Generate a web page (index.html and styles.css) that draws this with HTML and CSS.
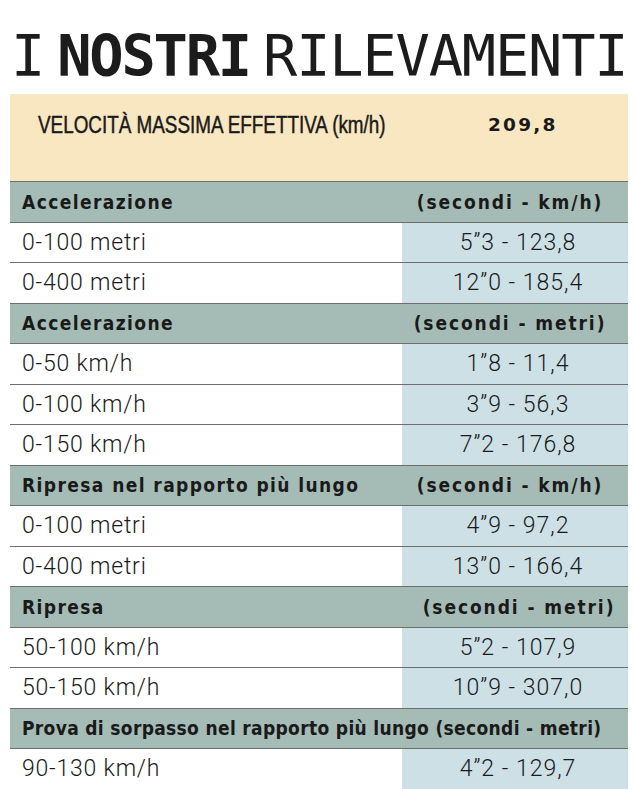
FILE: index.html
```html
<!DOCTYPE html>
<html lang="it">
<head>
<meta charset="utf-8">
<title>I nostri rilevamenti</title>
<link rel="stylesheet" href="styles.css">
</head>
<body>
<div class="sheet">
  <h1 class="title"><span class="light">I</span> <span class="bold">NOSTRI</span> <span class="light">RILEVAMENTI</span></h1>
  <div class="top">
    <span class="top-label"><span class="squeeze">VELOCITÀ MASSIMA EFFETTIVA (km/h)</span></span>
    <span class="top-value">209,8</span>
  </div>
  <div class="table">
    <div class="row head"><span class="lbl">Accelerazione</span><span class="val">(secondi - km/h)</span></div>
    <div class="row"><span class="lbl">0-100 metri</span><span class="val">5”3 - 123,8</span></div>
    <div class="row"><span class="lbl">0-400 metri</span><span class="val">12”0 - 185,4</span></div>
    <div class="row head"><span class="lbl">Accelerazione</span><span class="val">(secondi - metri)</span></div>
    <div class="row"><span class="lbl">0-50 km/h</span><span class="val">1”8 - 11,4</span></div>
    <div class="row"><span class="lbl">0-100 km/h</span><span class="val">3”9 - 56,3</span></div>
    <div class="row"><span class="lbl">0-150 km/h</span><span class="val">7”2 - 176,8</span></div>
    <div class="row head"><span class="lbl">Ripresa nel rapporto più lungo</span><span class="val">(secondi - km/h)</span></div>
    <div class="row"><span class="lbl">0-100 metri</span><span class="val">4”9 - 97,2</span></div>
    <div class="row"><span class="lbl">0-400 metri</span><span class="val">13”0 - 166,4</span></div>
    <div class="row head"><span class="lbl">Ripresa</span><span class="val shift">(secondi - metri)</span></div>
    <div class="row"><span class="lbl">50-100 km/h</span><span class="val">5”2 - 107,9</span></div>
    <div class="row"><span class="lbl">50-150 km/h</span><span class="val">10”9 - 307,0</span></div>
    <div class="row head wide"><span class="lbl">Prova di sorpasso nel rapporto più lungo (secondi - metri)</span></div>
    <div class="row"><span class="lbl">90-130 km/h</span><span class="val">4”2 - 129,7</span></div>
  </div>
</div>
</body>
</html>
```

FILE: styles.css
```css
* { box-sizing: border-box; }
html, body { margin: 0; padding: 0; background: #ffffff; }
body { width: 635px; height: 789px; overflow: hidden; }

.sheet { padding: 0 7px 0 10px; }

.title {
  margin: 0;
  height: 94px;
  padding-top: 29px;
  padding-left: 1px;
  font-family: "DejaVu Sans Mono", monospace;
  font-size: 57px;
  line-height: 55px;
  font-weight: normal;
  color: #1c1c1c;
  white-space: nowrap;
  letter-spacing: -1.2px;
  word-spacing: -20px;
}
.title .bold { font-weight: bold; letter-spacing: -2.2px; }
.title .light { font-weight: normal; }

.top {
  height: 87px;
  background: #f9e7c2;
  display: grid;
  grid-template-columns: 392px 226px;
  align-items: start;
  padding-top: 18px;
}
.top-label {
  padding-left: 28px;
  font-family: "Liberation Sans", Arial, sans-serif;
  font-size: 23px;
  color: #1a1a1a;
  white-space: nowrap;
  -webkit-text-stroke: 0.45px #1a1a1a;
}
.squeeze { display: inline-block; transform: scaleX(0.82); transform-origin: left center; }
.top-value {
  padding-left: 86px;
  padding-top: 2px;
  font-family: "DejaVu Sans", sans-serif;
  font-weight: bold;
  font-size: 18.5px;
  letter-spacing: 2.2px;
  color: #1a1a1a;
}

.row {
  height: 40.5px;
  border-top: 1px solid #6c6f6e;
  display: grid;
  grid-template-columns: 392px 226px;
  align-items: stretch;
}
.row .lbl {
  padding-left: 12px;
  display: flex;
  align-items: center;
  font-family: Roboto, sans-serif;
  font-weight: 300;
  font-size: 23px;
  letter-spacing: 0.8px;
  color: #1a1a1a;
  background: #ffffff;
  white-space: nowrap;
}
.row .val {
  display: flex;
  align-items: center;
  justify-content: center;
  padding-left: 6px;
  font-family: Roboto, sans-serif;
  font-weight: 300;
  font-size: 23px;
  letter-spacing: 1px;
  color: #1a1a1a;
  background: #cde0e6;
  white-space: nowrap;
}
.row.head { background: #a4bcb5; }
.row.head .lbl,
.row.head .val {
  background: transparent;
  font-family: "DejaVu Sans Condensed", "DejaVu Sans", sans-serif;
  font-stretch: condensed;
  font-weight: bold;
  font-size: 19px;
  letter-spacing: 1.4px;
  color: #1a1a1a;
}
.row.head .val { padding-left: 0; padding-right: 10px; letter-spacing: 1.9px; }
.row.head .val.shift { padding-right: 0; padding-left: 8px; }
.row.head.wide { grid-template-columns: 1fr; }
.row.head.wide .lbl { letter-spacing: 0.33px; }
```
